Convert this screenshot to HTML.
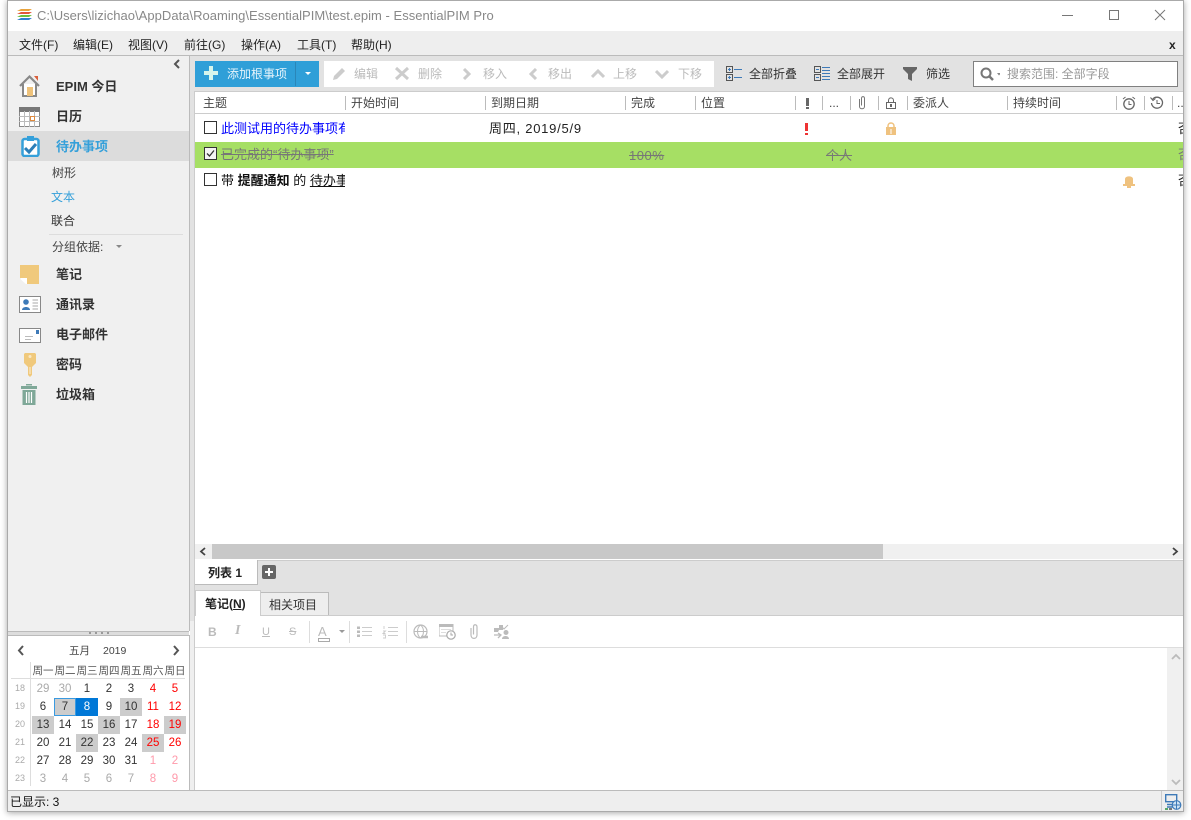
<!DOCTYPE html>
<html lang="zh"><head><meta charset="utf-8"><title>EssentialPIM Pro</title>
<style>
html,body{margin:0;padding:0;background:#fff;width:1191px;height:820px;overflow:hidden}
body{position:relative;font:12px/16px "Liberation Sans","Noto Sans CJK SC",sans-serif;color:#222}
.a,.t,svg{position:absolute}
.t{white-space:nowrap}
.m{top:37px;color:#222}
.n{left:56px;font-size:13px;font-weight:700;color:#333;line-height:18px}
.g{top:66px;color:#bbb}
.k{top:66px;color:#333}
.h{top:95px;color:#444}
.s{top:96px;width:1px;height:14px;background:#bbb}
.sub{left:52px;color:#444}
.d{width:22px;height:18px;text-align:center;line-height:18px;font-size:11.5px;color:#333;position:absolute}
.w{top:663px;width:22px;text-align:center;font-size:10.5px;color:#555;position:absolute}
.wk{left:11px;width:18px;text-align:center;font-size:9px;color:#aaa;line-height:18px;position:absolute}
.x{background:#ccc}.r{color:#f00}.o{color:#aaa}.pr{color:#f9a}
</style></head><body>
<!-- window -->
<div class="a" style="left:7px;top:0;width:1175px;height:810px;border:1px solid #aaa;box-shadow:0 1px 6px rgba(0,0,0,.35);background:#fff"></div>
<!-- title -->
<svg style="left:16px;top:8px" width="17" height="14"><path d="M1 3L5 1H16L13 3Z" fill="#e8a33d"/><path d="M1 6L5 4H16L13 6Z" fill="#e2553a"/><path d="M1 9L5 7H16L13 9Z" fill="#6cbf3c"/><path d="M1 12L5 10H16L13 12Z" fill="#2e7fd0"/></svg>
<div class="t" style="left:37px;top:8px;color:#888;font-size:13px;letter-spacing:.03px">C:\Users\lizichao\AppData\Roaming\EssentialPIM\test.epim - EssentialPIM Pro</div>
<svg style="left:1060px;top:8px" width="120" height="16" fill="none" stroke="#777"><path d="M2 7.500H13"/><rect x="49.500" y="2.500" width="9" height="9"/><path d="M95 2L105 12M105 2L95 12"/></svg>
<!-- menu -->
<div class="a" style="left:8px;top:31px;width:1175px;height:24px;background:#eee;border-bottom:1px solid #bbb"></div>
<div class="t m" style="left:19px">文件(F)</div><div class="t m" style="left:73px">编辑(E)</div><div class="t m" style="left:128px">视图(V)</div><div class="t m" style="left:184px">前往(G)</div><div class="t m" style="left:241px">操作(A)</div><div class="t m" style="left:297px">工具(T)</div><div class="t m" style="left:351px">帮助(H)</div>
<div class="t" style="left:1169px;top:37px;font-weight:700;font-size:12px;color:#222">x</div>
<!-- sidebar -->
<div class="a" style="left:8px;top:56px;width:181px;height:575px;background:#f0f0f0;border-right:1px solid #bbb"></div>
<svg style="left:173px;top:59px" width="8" height="10" fill="none" stroke="#555" stroke-width="2"><path d="M6 1L2 5L6 9"/></svg>
<div class="a" style="left:8px;top:131px;width:181px;height:30px;background:#dcdcdc"></div>
<svg style="left:18px;top:74px" width="24" height="24"><path d="M2 12L11.500 2.500L21 12" fill="none" stroke="#888" stroke-width="2.200"/><path d="M5 10V22H18V10" fill="#fff" stroke="#888" stroke-width="2"/><rect x="9" y="13" width="6" height="9" fill="#eec27a"/><path d="M16 2H20V7Z" fill="#d9603c"/></svg>
<svg style="left:19px;top:107px" width="21" height="20"><rect x=".5" y=".5" width="20" height="19" fill="#fff" stroke="#888"/><rect x="0" y="0" width="21" height="5" fill="#777"/><path d="M0 9.500H21M0 14.500H21M5.500 4V20M10.500 4V20M15.500 4V20" stroke="#bbb"/><rect x="11.500" y="9.500" width="4" height="4" fill="#fff" stroke="#e08a3c"/></svg>
<svg style="left:21px;top:135px" width="19" height="22"><rect x="1.500" y="4" width="16" height="17" rx="2" fill="#fff" stroke="#35a0da" stroke-width="2.500"/><rect x="6" y="1" width="7" height="5" fill="#35a0da"/><path d="M4 13L8 17L15 9" fill="none" stroke="#2c7fb8" stroke-width="3"/></svg>
<div class="t n" style="top:78px">EPIM 今日</div>
<div class="t n" style="top:108px">日历</div>
<div class="t n" style="top:138px;color:#35a0da">待办事项</div>
<div class="t sub" style="top:165px">树形</div>
<div class="t sub" style="top:189px;left:51px;color:#35a0da">文本</div>
<div class="t sub" style="top:213px;left:51px;color:#333">联合</div>
<div class="a" style="left:49px;top:234px;width:134px;height:1px;background:#ddd"></div>
<div class="t sub" style="top:239px">分组依据:</div>
<svg style="left:116px;top:245px" width="6" height="4"><path d="M0 0H6L3 3Z" fill="#888"/></svg>
<svg style="left:20px;top:265px" width="19" height="19"><path d="M0 0H19V19H6L0 13Z" fill="#f0c97c"/><path d="M0.500 13.500H6.500V19M0.500 13.500L6.500 19" fill="#fff" stroke="#fff"/></svg>
<div class="t n" style="top:266px">笔记</div>
<svg style="left:19px;top:296px" width="22" height="17"><rect x=".5" y=".5" width="21" height="16" fill="#fff" stroke="#888"/><circle cx="7" cy="6" r="2.800" fill="#3e7ab8"/><path d="M3 14C3 10 11 10 11 14Z" fill="#3e7ab8"/><path d="M13.500 4H19M13.500 7H19M13.500 10H19M13.500 13H19" stroke="#aaa"/></svg>
<div class="t n" style="top:296px">通讯录</div>
<svg style="left:19px;top:328px" width="22" height="15"><rect x=".5" y=".5" width="21" height="14" fill="#fff" stroke="#888"/><rect x="17" y="2" width="3" height="4" fill="#3e7ab8"/><path d="M6 8.500H14M6 11.500H12" stroke="#bbb"/></svg>
<div class="t n" style="top:326px">电子邮件</div>
<svg style="left:24px;top:353px" width="12" height="24"><path d="M0 1L1 0H11L12 1V10L8 14V22L6 24L4 22V14L0 10Z" fill="#f0c97c"/><circle cx="6" cy="3.500" r="1.500" fill="#fae8c4"/><path d="M6 14V21" stroke="#fff" stroke-width=".7"/></svg>
<div class="t n" style="top:356px">密码</div>
<svg style="left:21px;top:384px" width="17" height="21"><rect x="5" y="0" width="6" height="1.500" fill="#7fa898"/><rect x="0" y="2" width="16" height="3" fill="#7fa898"/><rect x="1.500" y="6" width="13" height="15" fill="#7fa898"/><path d="M5.500 8V19M8 8V19M10.500 8V19" stroke="#fff" stroke-width="1.200"/></svg>
<div class="t n" style="top:386px">垃圾箱</div>
<!-- splitter -->
<div class="a" style="left:8px;top:631px;width:181px;height:4px;background:#ddd;border-top:1px solid #bbb"></div>
<div class="a" style="left:89px;top:632px;width:20px;height:2px;background:repeating-linear-gradient(90deg,#999 0 2px,transparent 2px 6px)"></div>
<!-- calendar -->
<div class="a" style="left:8px;top:635px;width:181px;height:155px;background:#fff;border-right:1px solid #bbb;border-top:1px solid #bbb"></div>
<svg style="left:17px;top:645px" width="8" height="11" fill="none" stroke="#555" stroke-width="2"><path d="M6 1L2 5.500L6 10"/></svg>
<svg style="left:172px;top:645px" width="8" height="11" fill="none" stroke="#555" stroke-width="2"><path d="M2 1L6 5.500L2 10"/></svg>
<div class="t" style="left:69px;top:643px;font-size:10.500px;color:#444">五月</div><div class="t" style="left:103px;top:643px;font-size:10.500px;color:#444">2019</div>
<div class="w" style="left:32px">周一</div><div class="w" style="left:54px">周二</div><div class="w" style="left:76px">周三</div><div class="w" style="left:98px">周四</div><div class="w" style="left:120px">周五</div><div class="w" style="left:142px">周六</div><div class="w" style="left:164px">周日</div>
<div class="a" style="left:11px;top:678px;width:174px;height:1px;background:#ddd"></div>
<div class="a" style="left:30px;top:662px;width:1px;height:124px;background:#ddd"></div>
<div class="wk" style="top:679px">18</div><div class="wk" style="top:697px">19</div><div class="wk" style="top:715px">20</div><div class="wk" style="top:733px">21</div><div class="wk" style="top:751px">22</div><div class="wk" style="top:769px">23</div>
<div class="d o" style="left:32px;top:680px">29</div><div class="d o" style="left:54px;top:680px">30</div><div class="d" style="left:76px;top:680px">1</div><div class="d" style="left:98px;top:680px">2</div><div class="d" style="left:120px;top:680px">3</div><div class="d r" style="left:142px;top:680px">4</div><div class="d r" style="left:164px;top:680px">5</div>
<div class="d" style="left:32px;top:698px">6</div><div class="d x" style="left:54px;top:698px;box-sizing:border-box;border:1px solid #3a9ae0;line-height:16px">7</div><div class="d" style="left:76px;top:698px;background:#0078d7;color:#fff">8</div><div class="d" style="left:98px;top:698px">9</div><div class="d x" style="left:120px;top:698px">10</div><div class="d r" style="left:142px;top:698px">11</div><div class="d r" style="left:164px;top:698px">12</div>
<div class="d x" style="left:32px;top:716px">13</div><div class="d" style="left:54px;top:716px">14</div><div class="d" style="left:76px;top:716px">15</div><div class="d x" style="left:98px;top:716px">16</div><div class="d" style="left:120px;top:716px">17</div><div class="d r" style="left:142px;top:716px">18</div><div class="d x r" style="left:164px;top:716px">19</div>
<div class="d" style="left:32px;top:734px">20</div><div class="d" style="left:54px;top:734px">21</div><div class="d x" style="left:76px;top:734px">22</div><div class="d" style="left:98px;top:734px">23</div><div class="d" style="left:120px;top:734px">24</div><div class="d x r" style="left:142px;top:734px">25</div><div class="d r" style="left:164px;top:734px">26</div>
<div class="d" style="left:32px;top:752px">27</div><div class="d" style="left:54px;top:752px">28</div><div class="d" style="left:76px;top:752px">29</div><div class="d" style="left:98px;top:752px">30</div><div class="d" style="left:120px;top:752px">31</div><div class="d pr" style="left:142px;top:752px">1</div><div class="d pr" style="left:164px;top:752px">2</div>
<div class="d o" style="left:32px;top:770px">3</div><div class="d o" style="left:54px;top:770px">4</div><div class="d o" style="left:76px;top:770px">5</div><div class="d o" style="left:98px;top:770px">6</div><div class="d o" style="left:120px;top:770px">7</div><div class="d pr" style="left:142px;top:770px">8</div><div class="d pr" style="left:164px;top:770px">9</div>
<!-- toolbar -->
<div class="a" style="left:190px;top:56px;width:993px;height:35px;background:#e2e2e2"></div>
<div class="a" style="left:195px;top:61px;width:124px;height:26px;background:#2f9fd8"></div>
<div class="a" style="left:295px;top:62px;width:1px;height:24px;background:#2a86b8"></div>
<svg style="left:204px;top:66px" width="14" height="14"><path d="M5 0H9V5H14V9H9V14H5V9H0V5H5Z" fill="#d6f5ec"/></svg>
<div class="t" style="left:227px;top:66px;color:#e6f4fb">添加根事项</div>
<svg style="left:305px;top:72px" width="6" height="4"><path d="M0 0H6L3 3Z" fill="#fff"/></svg>
<div class="a" style="left:324px;top:61px;width:390px;height:26px;background:#fff"></div>
<svg style="left:332px;top:66px" width="15" height="15"><path d="M1 14L2 10L10 2L13 5L5 13Z" fill="#ccc"/></svg>
<div class="t g" style="left:354px">编辑</div>
<svg style="left:394px;top:66px" width="16" height="15" fill="none" stroke="#ccc" stroke-width="3"><path d="M2 2L14 13M14 2L2 13"/></svg>
<div class="t g" style="left:418px">删除</div>
<svg style="left:462px;top:68px" width="10" height="12" fill="none" stroke="#ccc" stroke-width="3"><path d="M2 1L7 6L2 11"/></svg>
<div class="t g" style="left:483px">移入</div>
<svg style="left:528px;top:68px" width="10" height="12" fill="none" stroke="#ccc" stroke-width="3"><path d="M8 1L3 6L8 11"/></svg>
<div class="t g" style="left:548px">移出</div>
<svg style="left:591px;top:69px" width="14" height="10" fill="none" stroke="#ccc" stroke-width="3"><path d="M1 8L7 2L13 8"/></svg>
<div class="t g" style="left:613px">上移</div>
<svg style="left:655px;top:69px" width="14" height="10" fill="none" stroke="#ccc" stroke-width="3"><path d="M1 2L7 8L13 2"/></svg>
<div class="t g" style="left:678px">下移</div>
<svg style="left:726px;top:66px" width="17" height="15" fill="none"><rect x=".5" y=".5" width="6" height="6" stroke="#555"/><rect x=".5" y="8.500" width="6" height="6" stroke="#555"/><path d="M2 3.500H5M3.500 2V5M2 11.500H5M3.500 10V13" stroke="#3e7ab8"/><path d="M8 3.500H16M8 11.500H16" stroke="#3e7ab8"/></svg>
<div class="t k" style="left:749px">全部折叠</div>
<svg style="left:814px;top:66px" width="17" height="15" fill="none"><rect x=".5" y=".5" width="6" height="6" stroke="#555"/><rect x=".5" y="8.500" width="6" height="6" stroke="#555"/><path d="M2 3.500H5M2 11.500H5M8 1.500H16M8 4.500H16M8 7.500H16M8 10.500H16M8 13.500H16" stroke="#3e7ab8"/></svg>
<div class="t k" style="left:837px">全部展开</div>
<svg style="left:903px;top:67px" width="14" height="14"><path d="M0 0H14V2L9 7V14L5 12V7L0 2Z" fill="#666"/></svg>
<div class="t k" style="left:926px">筛选</div>
<div class="a" style="left:973px;top:61px;width:203px;height:24px;background:#fff;border:1px solid #808080"></div>
<svg style="left:980px;top:67px" width="20" height="14" fill="none"><circle cx="6" cy="6" r="4.500" stroke="#777" stroke-width="2"/><path d="M9 9L13 13" stroke="#777" stroke-width="2.500"/><path d="M17 6H21L19 8.500Z" fill="#888"/></svg>
<div class="t" style="left:1007px;top:66px;color:#999">搜索范围: 全部字段</div>
<!-- header -->
<div class="a" style="left:194px;top:91px;width:989px;height:23px;background:#fff;border-top:1px solid #ccc;border-bottom:1px solid #ccc;border-left:1px solid #ccc;box-sizing:border-box"></div>
<div class="a" style="left:190px;top:91px;width:4px;height:530px;background:#e2e2e2"></div>
<div class="a" style="left:190px;top:621px;width:4px;height:169px;background:#efefef"></div>
<div class="a" style="left:194px;top:114px;width:1px;height:676px;background:#ccc"></div>
<div class="t h" style="left:203px">主题</div><div class="s a" style="left:345px"></div>
<div class="t h" style="left:351px">开始时间</div><div class="s a" style="left:485px"></div>
<div class="t h" style="left:491px">到期日期</div><div class="s a" style="left:625px"></div>
<div class="t h" style="left:631px">完成</div><div class="s a" style="left:695px"></div>
<div class="t h" style="left:701px">位置</div><div class="s a" style="left:795px"></div>
<div class="a" style="left:806px;top:98px;width:3px;height:8px;background:#666"></div><div class="a" style="left:806px;top:107px;width:3px;height:2px;background:#666"></div><div class="s a" style="left:822px"></div>
<div class="t h" style="left:829px">...</div><div class="s a" style="left:850px"></div>
<svg style="left:858px;top:96px" width="8" height="14" fill="none" stroke="#777"><path d="M1.500 3V10.500C1.500 13.500 6.500 13.500 6.500 10.500V2.500C6.500 0 3.500 0 3.500 2.500V9.500"/></svg><div class="s a" style="left:878px"></div>
<svg style="left:886px;top:97px" width="10" height="12"><path d="M2.500 5V3.500C2.500 0 7.500 0 7.500 3.500V5" fill="none" stroke="#666"/><rect x=".5" y="5.500" width="9" height="6" fill="#fff" stroke="#666"/><rect x="4" y="7" width="2" height="3" fill="#666"/></svg><div class="s a" style="left:907px"></div>
<div class="t h" style="left:913px">委派人</div><div class="s a" style="left:1007px"></div>
<div class="t h" style="left:1013px">持续时间</div><div class="s a" style="left:1116px"></div>
<svg style="left:1122px;top:96px" width="14" height="14" fill="none" stroke="#666"><circle cx="7" cy="8" r="5.200" stroke-width="1.300"/><path d="M7 5V8.500H9.500M1 3L3.500 1M13 3L10.500 1"/></svg><div class="s a" style="left:1144px"></div>
<svg style="left:1150px;top:96px" width="14" height="14" fill="none" stroke="#666" stroke-width="1.300"><path d="M2.500 3.500A5.500 5.500 0 1 1 1.500 7"/><path d="M0.500 1.500L3 4.500L5.500 2.500M7 4V7.500H10" stroke-width="1"/></svg><div class="s a" style="left:1172px"></div>
<div class="t h" style="left:1177px">..</div>
<!-- rows -->
<div class="a" style="left:195px;top:142px;width:988px;height:26px;background:#a6df64"></div>
<svg style="left:204px;top:121px" width="13" height="13"><rect x=".5" y=".5" width="12" height="12" fill="#fff" stroke="#333"/></svg>
<div class="a" style="left:221px;top:120px;width:124px;overflow:hidden;height:18px;white-space:nowrap;font-size:13px;line-height:17px;color:#00f">此测试用的待办事项有</div>
<div class="t" style="left:489px;top:121px;font-size:13px;color:#222;letter-spacing:.75px">周四, 2019/5/9</div>
<div class="a" style="left:805px;top:123px;width:3px;height:8px;background:#ee3333"></div><div class="a" style="left:805px;top:133px;width:3px;height:2px;background:#ee3333"></div>
<svg style="left:886px;top:122px" width="10" height="13"><path d="M2 6V4C2 0 8 0 8 4V6" fill="none" stroke="#efc27f" stroke-width="1.500"/><rect x="0" y="5" width="10" height="8" fill="#efc27f"/><path d="M5 7V12" stroke="#fff"/></svg>
<div class="a" style="left:1178px;top:120px;width:5px;overflow:hidden;font-size:13px;line-height:17px;color:#222">否</div>
<svg style="left:204px;top:147px" width="13" height="13"><rect x=".5" y=".5" width="12" height="12" fill="#f4f4f4" stroke="#333"/><path d="M3 6.500L5.500 9L10 3.500" fill="none" stroke="#333" stroke-width="1.300"/></svg>
<div class="t" style="left:221px;top:147px;font-size:13px;color:#777;text-decoration:line-through">已完成的“待办事项”</div>
<div class="t" style="left:629px;top:148px;font-size:13px;letter-spacing:.5px;color:#777;text-decoration:line-through">100%</div>
<div class="t" style="left:826px;top:148px;font-size:13px;color:#777;text-decoration:line-through">个人</div>
<div class="a" style="left:1178px;top:146px;width:5px;overflow:hidden;font-size:13px;line-height:17px;color:#777">否</div>
<svg style="left:204px;top:173px" width="13" height="13"><rect x=".5" y=".5" width="12" height="12" fill="#fff" stroke="#333"/></svg>
<div class="a" style="left:221px;top:172px;width:124px;overflow:hidden;height:18px;white-space:nowrap;font-size:13px;line-height:17px;color:#111">带 <b>提醒通知</b> 的 <u>待办事项</u></div>
<svg style="left:1123px;top:175px" width="12" height="13"><path d="M2 9V4C2 0.500 10 0.500 10 4V9Z" fill="#efc27f"/><rect x="0" y="9" width="12" height="2" fill="#efc27f"/><rect x="4" y="11" width="4" height="2" fill="#efc27f"/></svg>
<div class="a" style="left:1178px;top:172px;width:5px;overflow:hidden;font-size:13px;line-height:17px;color:#222">否</div>
<!-- hscroll -->
<div class="a" style="left:195px;top:544px;width:988px;height:15px;background:#f0f0f0"></div>
<div class="a" style="left:212px;top:544px;width:671px;height:15px;background:#c8c8c8"></div>
<svg style="left:199px;top:547px" width="8" height="9" fill="none" stroke="#444" stroke-width="1.800"><path d="M6 1L2 4.500L6 8"/></svg>
<svg style="left:1171px;top:547px" width="8" height="9" fill="none" stroke="#444" stroke-width="1.800"><path d="M2 1L6 4.500L2 8"/></svg>
<!-- tabs -->
<div class="a" style="left:195px;top:560px;width:988px;height:56px;background:#e2e2e2;border-top:1px solid #ccc;box-sizing:border-box"></div>
<div class="a" style="left:195px;top:560px;width:63px;height:25px;background:#fff;border-right:1px solid #bbb;border-bottom:1px solid #bbb;box-sizing:border-box"></div>
<div class="t" style="left:208px;top:565px;font-weight:700;color:#222">列表 1</div>
<div class="a" style="left:262px;top:565px;width:14px;height:14px;background:#666;border-radius:2px"></div>
<svg style="left:264px;top:567px" width="10" height="10"><path d="M4 1H6V4H9V6H6V9H4V6H1V4H4Z" fill="#fff"/></svg>
<div class="a" style="left:195px;top:590px;width:66px;height:26px;background:#fff;border:1px solid #ccc;border-bottom:0;box-sizing:border-box"></div>
<div class="t" style="left:205px;top:596px;font-weight:700;color:#222">笔记(<u>N</u>)</div>
<div class="a" style="left:261px;top:592px;width:68px;height:24px;background:#eee;border:1px solid #bbb;border-bottom:0;border-left:0;box-sizing:border-box"></div>
<div class="t" style="left:269px;top:597px;color:#333">相关项目</div>
<div class="a" style="left:195px;top:615px;width:988px;height:176px;background:#fff;border-top:1px solid #ccc;box-sizing:border-box"></div>
<div class="a" style="left:261px;top:615px;width:0;height:1px"></div>
<div class="a" style="left:196px;top:615px;width:64px;height:1px;background:#fff"></div>
<div class="a" style="left:195px;top:647px;width:988px;height:1px;background:#ddd"></div>
<!-- note toolbar -->
<div class="t" style="left:208px;top:624px;font-weight:700;color:#bbb;font-size:12px">B</div>
<div class="t" style="left:235px;top:623px;font-family:'Liberation Serif';font-style:italic;font-weight:700;color:#bbb;font-size:14px">I</div>
<div class="t" style="left:262px;top:624px;color:#bbb;font-size:11px;text-decoration:underline">U</div>
<div class="t" style="left:289px;top:624px;color:#bbb;font-size:11px;text-decoration:line-through">S</div>
<div class="a" style="left:309px;top:621px;width:1px;height:22px;background:#ddd"></div>
<div class="t" style="left:318px;top:624px;color:#bbb;font-size:13px">A</div>
<div class="a" style="left:318px;top:638px;width:10px;height:2px;border:1px solid #aaa"></div>
<svg style="left:339px;top:630px" width="6" height="4"><path d="M0 0H6L3 3Z" fill="#999"/></svg>
<div class="a" style="left:349px;top:621px;width:1px;height:22px;background:#ddd"></div>
<svg style="left:357px;top:625px" width="15" height="14" stroke="#ccc" fill="none"><path d="M5 2.500H15M5 6.500H15M5 10.500H15"/><path d="M0 1.500H3V4H0ZM0 5.500H3V8H0ZM0 9.500H3V12H0Z" fill="#bbb" stroke="none"/></svg>
<svg style="left:382px;top:625px" width="16" height="14" stroke="#ccc" fill="none"><path d="M6 2.500H16M6 6.500H16M6 10.500H16M2 1V4M1 6H3.500L1 8.500H3.500M1 10H3.500V13H1" stroke-width=".9"/></svg>
<div class="a" style="left:406px;top:621px;width:1px;height:22px;background:#ddd"></div>
<svg style="left:413px;top:624px" width="16" height="16" fill="none" stroke="#bbb"><circle cx="7.500" cy="7.500" r="6.500" stroke-width="1.200"/><path d="M1 7.500H14M7.500 1C3.500 4 3.500 11 7.500 14M7.500 1C11.500 4 11.500 11 7.500 14"/><path d="M8 13H15" stroke-width="2.500"/></svg>
<svg style="left:439px;top:624px" width="17" height="16"><rect x="0" y="0" width="14" height="12" fill="#fff" stroke="#bbb"/><rect x="0" y="0" width="14" height="3" fill="#bbb"/><path d="M2 5.500H12M2 8.500H7" stroke="#ddd"/><circle cx="12" cy="11" r="4.200" fill="#fff" stroke="#aaa" stroke-width="1.200"/><path d="M12 8.500V11H14" stroke="#aaa" fill="none"/></svg>
<svg style="left:469px;top:624px" width="10" height="16" fill="none" stroke="#bbb" stroke-width="1.200"><path d="M2 4V11C2 15.500 8 15.500 8 11V3C8 0 4.500 0 4.500 3V10.500"/></svg>
<svg style="left:493px;top:624px" width="17" height="16"><path d="M1 4H6V1H10V6H6L5 8H1Z" fill="#bbb"/><path d="M9 3L11 5L15 1" stroke="#bbb" fill="none"/><path d="M1 11H8M5 9L8 11L5 14" stroke="#bbb" fill="none" stroke-width="1.300"/><circle cx="13" cy="8.500" r="2.500" fill="#bbb"/><path d="M9 15C9 11 16 11 16 15Z" fill="#bbb"/></svg>
<!-- vscroll -->
<div class="a" style="left:1167px;top:648px;width:16px;height:143px;background:#f0f0f0"></div>
<svg style="left:1171px;top:653px" width="10" height="7" fill="none" stroke="#bbb" stroke-width="1.800"><path d="M1 6L5 2L9 6"/></svg>
<svg style="left:1171px;top:779px" width="10" height="7" fill="none" stroke="#bbb" stroke-width="1.800"><path d="M1 1L5 5L9 1"/></svg>
<!-- status -->
<div class="a" style="left:8px;top:790px;width:1175px;height:21px;background:#eee;border-top:1px solid #bbb;box-sizing:border-box"></div>
<div class="t" style="left:10px;top:794px;color:#111;font-size:12px">已显示: 3</div>
<div class="a" style="left:1161px;top:791px;width:1px;height:20px;background:#ccc"></div>
<svg style="left:1165px;top:794px" width="18" height="16" fill="none"><rect x=".7" y=".7" width="11" height="7" stroke="#3e7ab8" stroke-width="1.400"/><path d="M2 10.500H8M2 13H8" stroke="#3e7ab8" stroke-width="1.600"/><path d="M0 15H3" stroke="#5aa86a" stroke-width="2"/><path d="M4 15H7" stroke="#777" stroke-width="2"/><circle cx="11.500" cy="11" r="4.300" fill="#cfe3f3" stroke="#3e7ab8" stroke-width="1.200"/><path d="M7 11H16M11.500 6.500V15.500" stroke="#3e7ab8"/></svg>
</body></html>
